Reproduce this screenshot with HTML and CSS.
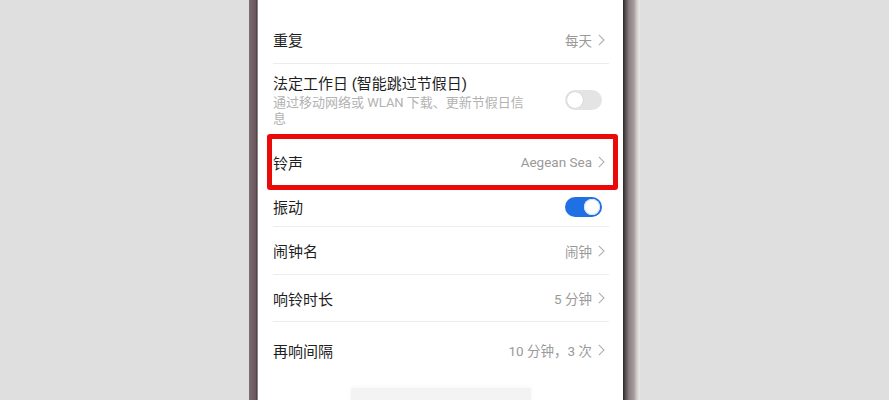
FILE: index.html
```html
<!DOCTYPE html>
<html lang="zh-CN">
<head>
  <meta charset="UTF-8">
  <meta name="viewport" content="width=device-width, initial-scale=1.0">
  <title>闹钟设置</title>
  <link rel="stylesheet" href="styles.css">
</head>
<body>
  <div class="phone">
    <div class="screen">
      <div class="settings">
        <div class="row">
          <div class="row-title">重复</div>
          <div class="row-value">每天 <svg class="chevron" viewBox="0 0 7 12"><polyline points="0.8,0.8 6,6 0.8,11.2"/></svg></div>
        </div>

        <div class="row row-tall">
          <div class="row-text">
            <div class="row-title">法定工作日 (智能跳过节假日)</div>
            <div class="row-desc">通过移动网络或 WLAN 下载、更新节假日信息</div>
          </div>
          <div class="switch"><div class="knob"></div></div>
        </div>

        <div class="highlight">
          <div class="row row-plain">
            <div class="row-title">铃声</div>
            <div class="row-value">Aegean Sea <svg class="chevron" viewBox="0 0 7 12"><polyline points="0.8,0.8 6,6 0.8,11.2"/></svg></div>
          </div>
        </div>

        <div class="row row-short">
          <div class="row-title">振动</div>
          <div class="switch on"><div class="knob"></div></div>
        </div>

        <div class="row">
          <div class="row-title">闹钟名</div>
          <div class="row-value">闹钟 <svg class="chevron" viewBox="0 0 7 12"><polyline points="0.8,0.8 6,6 0.8,11.2"/></svg></div>
        </div>

        <div class="row row-mid">
          <div class="row-title">响铃时长</div>
          <div class="row-value">5 分钟 <svg class="chevron" viewBox="0 0 7 12"><polyline points="0.8,0.8 6,6 0.8,11.2"/></svg></div>
        </div>

        <div class="row row-last">
          <div class="row-title">再响间隔</div>
          <div class="row-value">10 分钟，3 次 <svg class="chevron" viewBox="0 0 7 12"><polyline points="0.8,0.8 6,6 0.8,11.2"/></svg></div>
        </div>
      </div>

      <div class="bottom-card"></div>
    </div>
  </div>
</body>
</html>
```

FILE: styles.css
```css
* {
  margin: 0;
  padding: 0;
  box-sizing: border-box;
}

body {
  font-family: Roboto, "Noto Sans CJK SC", sans-serif;
  background: #dfdfdf;
  height: 400px;
  overflow: hidden;
  display: flex;
  justify-content: center;
  color: #1f1f1f;
}

.phone {
  width: 391px;
  height: 400px;
  padding: 0 17px 0 9px;
  background:
    linear-gradient(90deg, #7c6a6e 0, #67585d 7px, #3c3437 8px, #d8d2d2 9px) left / 9px 100% no-repeat,
    linear-gradient(90deg, #2a2427 0, #4e4649 2px, #8a8083 6px, #a69c9e 11px, #d6cfcf 14px, #ece8e8 17px) right / 17px 100% no-repeat;
}

.screen {
  background: #fff;
  height: 100%;
  padding: 16px 14px 0 15px;
}

.row {
  display: flex;
  align-items: center;
  justify-content: space-between;
  height: 48px;
  border-bottom: 1px solid #ececec;
  padding-right: 4px;
}

.row-title {
  font-size: 15px;
  color: #1f1f1f;
}

.row-value {
  display: flex;
  align-items: center;
  gap: 6px;
  font-size: 13.5px;
  color: #9a9a9a;
}

.chevron {
  width: 7px;
  height: 12px;
  fill: none;
  stroke: #b0b0b0;
  stroke-width: 1.1;
}

.row-tall {
  height: 70px;
  align-items: flex-start;
  padding-top: 10px;
  border-bottom: none;
  padding-right: 7px;
}

.row-tall .switch {
  margin-top: 16px;
}

.row-desc {
  width: 262px;
  font-size: 13px;
  line-height: 16px;
  color: #b2b2b2;
  margin-top: 1px;
}

.row-tall .row-title {
  line-height: 20px;
}

.highlight {
  margin: 0 -9px 0 -6px;
  height: 56px;
  border: 5px solid #ea0a0a;
  border-radius: 3px;
  padding: 0 8px 0 1px;
}

.row-plain {
  height: 46px;
  border-bottom: none;
  padding-right: 0;
}

.row-short {
  height: 37px;
  padding-right: 7px;
  padding-bottom: 3px;
}

.row-mid {
  height: 47px;
}

.row-last {
  height: 56px;
  border-bottom: none;
}

.switch {
  width: 37px;
  height: 20px;
  border-radius: 10px;
  background: #e4e4e4;
  padding: 2px;
  display: flex;
}

.knob {
  width: 16px;
  height: 16px;
  border-radius: 50%;
  background: #fff;
  box-shadow: 0 0 1px rgba(0, 0, 0, 0.25);
}

.switch.on {
  background: #1f6fe5;
  justify-content: flex-end;
}

.switch.on .knob {
  box-shadow: inset 0 0 0 1px #d6e4f8;
}

.bottom-card {
  width: 180px;
  height: 24px;
  margin: 10px auto 0;
  background: #f3f3f3;
  box-shadow: 0 -1px 4px rgba(0, 0, 0, 0.04);
}
```
